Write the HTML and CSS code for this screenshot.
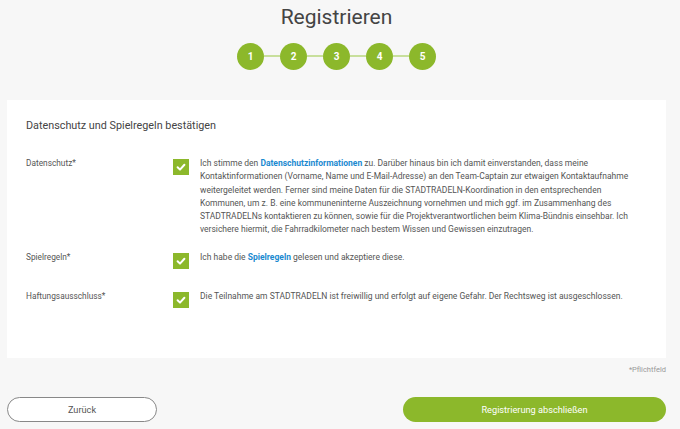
FILE: index.html
```html
<!DOCTYPE html>
<html lang="de">
<head>
<meta charset="utf-8">
<title>Registrieren</title>
<link rel="stylesheet" href="styles.css">
</head>
<body>
<div class="page">
  <h1 class="title">Registrieren</h1>
  <div class="steps">
    <span class="step">1</span><span class="line"></span>
    <span class="step">2</span><span class="line"></span>
    <span class="step">3</span><span class="line"></span>
    <span class="step">4</span><span class="line"></span>
    <span class="step">5</span>
  </div>
  <div class="card">
    <h2 class="card-title">Datenschutz und Spielregeln bestätigen</h2>
    <div class="row row-first">
      <div class="label">Datenschutz*</div>
      <span class="check"><svg viewBox="0 0 16 16" width="16" height="16"><path d="M4.6 8.3 L7 10.6 L11.4 5.8" fill="none" stroke="#fff" stroke-width="2" stroke-linecap="round" stroke-linejoin="round"/></svg></span>
      <p class="text">Ich stimme den <a class="link">Datenschutzinformationen</a> zu. Darüber hinaus bin ich damit einverstanden, dass meine Kontaktinformationen (Vorname, Name und E-Mail-Adresse) an den Team-Captain zur etwaigen Kontaktaufnahme weitergeleitet werden. Ferner sind meine Daten für die STADTRADELN-Koordination in den entsprechenden Kommunen, um z. B. eine kommuneninterne Auszeichnung vornehmen und mich ggf. im Zusammenhang des STADTRADELNs kontaktieren zu können, sowie für die Projektverantwortlichen beim Klima-Bündnis einsehbar. Ich versichere hiermit, die Fahrradkilometer nach bestem Wissen und Gewissen einzutragen.</p>
    </div>
    <div class="row row-second">
      <div class="label">Spielregeln*</div>
      <span class="check"><svg viewBox="0 0 16 16" width="16" height="16"><path d="M4.6 8.3 L7 10.6 L11.4 5.8" fill="none" stroke="#fff" stroke-width="2" stroke-linecap="round" stroke-linejoin="round"/></svg></span>
      <p class="text">Ich habe die <a class="link">Spielregeln</a> gelesen und akzeptiere diese.</p>
    </div>
    <div class="row">
      <div class="label">Haftungsausschluss*</div>
      <span class="check"><svg viewBox="0 0 16 16" width="16" height="16"><path d="M4.6 8.3 L7 10.6 L11.4 5.8" fill="none" stroke="#fff" stroke-width="2" stroke-linecap="round" stroke-linejoin="round"/></svg></span>
      <p class="text">Die Teilnahme am STADTRADELN ist freiwillig und erfolgt auf eigene Gefahr. Der Rechtsweg ist ausgeschlossen.</p>
    </div>
  </div>
  <div class="required">*Pflichtfeld</div>
  <div class="actions">
    <button class="btn btn-back">Zurück</button>
    <button class="btn btn-submit">Registrierung abschließen</button>
  </div>
</div>
</body>
</html>
```

FILE: styles.css
```css
* { box-sizing: border-box; }
html, body { margin: 0; padding: 0; }
body {
  background: #f7f7f7;
  font-family: Roboto, "Liberation Sans", Arial, sans-serif;
  color: #555;
  width: 680px;
  height: 429px;
  overflow: hidden;
}
.page {
  padding: 0 14px 0 7px;
}
.title {
  margin: 0;
  padding-top: 4px;
  height: 30px;
  line-height: 26px;
  font-size: 21px;
  font-weight: 400;
  color: #444;
  text-align: center;
}
.steps {
  display: flex;
  align-items: center;
  justify-content: center;
  margin-top: 12px;
  height: 28px;
  padding-left: 0;
}
.step {
  width: 27px;
  height: 27px;
  border-radius: 50%;
  background: #8cb82b;
  color: #fff;
  font-size: 10px;
  font-weight: 700;
  display: flex;
  align-items: center;
  justify-content: center;
}
.line {
  width: 16px;
  height: 2px;
  background: #c8df9c;
}
.card {
  margin-top: 30px;
  background: #fff;
  padding: 18px 28px 50px 19px;
  height: 258px;
}
.card-title {
  margin: 0;
  font-size: 10.8px;
  line-height: 15px;
  font-weight: 400;
  color: #444;
}
.row {
  display: flex;
  align-items: flex-start;
}
.row-first { margin-top: 24px; margin-bottom: 14px; }
.row-second { margin-bottom: 21px; min-height: 18px; }
.label {
  width: 147px;
  flex: none;
  font-size: 8.3px;
  line-height: 13px;
  color: #555;
}
.check {
  flex: none;
  width: 16px;
  height: 16px;
  margin-top: 2px;
  margin-right: 11px;
  background: #8cb82b;
  display: block;
}
.check svg { display: block; }
.text {
  margin: 0;
  font-size: 8.5px;
  line-height: 13.3px;
  color: #555;
}
.link {
  color: #1b8ad0;
  font-weight: 700;
}
.required {
  text-align: right;
  font-size: 7.5px;
  color: #999;
  margin-top: 7px;
  line-height: 10px;
}
.actions {
  display: flex;
  justify-content: space-between;
  margin-top: 22px;
}
.btn {
  font-family: Roboto, "Liberation Sans", Arial, sans-serif;
  font-size: 9.2px;
  height: 25px;
  border-radius: 13px;
  cursor: pointer;
}
.btn-back {
  width: 150px;
  background: #fff;
  border: 1px solid #888;
  color: #555;
}
.btn-submit {
  width: 263px;
  background: #8cb82b;
  border: none;
  color: #fff;
}
```
